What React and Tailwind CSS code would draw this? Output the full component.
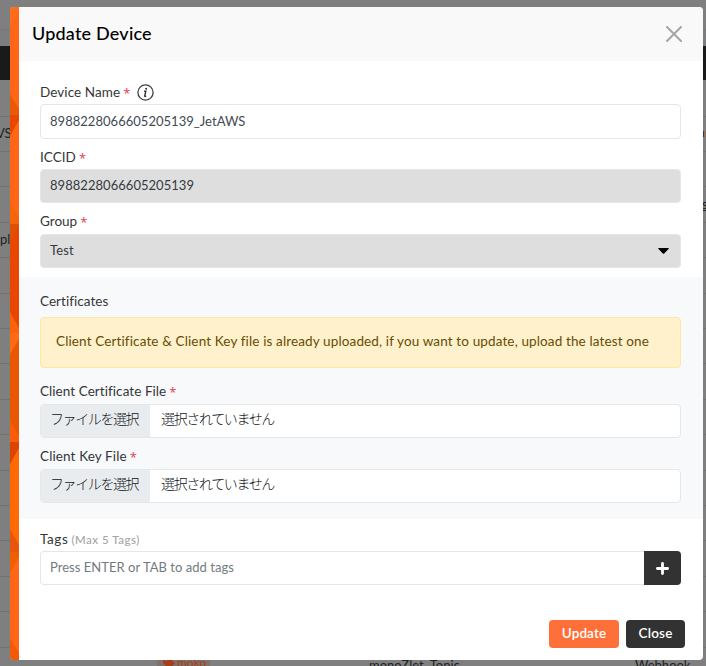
import React from 'react';

const rows = [
  { h: 'h-[36px]' },
  { h: 'h-[35px]', left: 'VS', right: 'name' },
  { h: 'h-[35px]' },
  { h: 'h-[36px]', right: 'link' },
  { h: 'h-[35px]', left: 'pl' },
  { h: 'h-[36px]' },
  { h: 'h-[35px]' },
  { h: 'h-[35px]' },
  { h: 'h-[36px]' },
  { h: 'h-[35px]' },
  { h: 'h-[36px]' },
  { h: 'h-[35px]' },
  { h: 'h-[35px]' },
  { h: 'h-[36px]' },
  { h: 'h-[35px]' },
  { h: 'h-[36px]' },
];

function Backdrop() {
  return (
    <div className="h-full overflow-hidden bg-[#7f7f7f] text-[13px] text-[#202225]">
      <div className="h-[30px] border-b border-[#777a7d]" />
      <div className="h-4 bg-[#7c7d7e]" />
      <div className="h-[35px] border-b border-[#7f7f7f] bg-[#1a1a1a] bg-clip-padding" />
      {rows.map((row, i) => (
        <div key={i} className={`${row.h} flex items-center justify-between overflow-hidden border-b border-[#727272]`}>
          <span className={row.left === 'VS' ? '-ml-1' : ''}>{row.left}</span>
          {row.right === 'name' && (
            <span className="flex h-1.5">
              <i className="w-px bg-[#223a66]" />
              <i className="ml-px w-px bg-[#a0673f]" />
            </span>
          )}
          {row.right === 'link' && <span className="w-[4px] underline">s</span>}
        </div>
      ))}
      <div className="flex h-5 leading-[20px]">
        <div className="ml-[157px] mt-[7px] flex h-4 w-[53px] items-center gap-0.5 bg-[#80716b] pl-1.5 text-[12px] text-[#a63e17]">
          <svg className="h-3 w-3 shrink-0" viewBox="0 0 12 12" fill="currentColor">
            <path fillRule="evenodd" d="M0 1.2Q0 0 1.2 0h4.5L12 6.3 6.7 11.6Q6 12 5.5 11.5L0 6zM3 1.7a1.2 1.2 0 1 0 0 2.4 1.2 1.2 0 0 0 0-2.4" />
          </svg>
          <span className="leading-4">moko</span>
        </div>
        <span className="ml-[159px] mt-[7px] w-[266px]">monoZlet_Topic</span>
        <span className="mt-[7px]">Webhook</span>
      </div>
    </div>
  );
}

function FacetStrip() {
  return (
    <svg className="h-[653px] w-[9px] shrink-0" viewBox="0 0 9 653" preserveAspectRatio="none">
      <rect width="9" height="653" fill="#ff6716" />
      <path d="M0 20L9 4V0H0z" fill="#ff6c1c" />
      <path d="M0 87L9 102V108H0z" fill="#e85a05" />
      <path d="M0 108H9V113L0 129z" fill="#e94600" />
      <path d="M0 195L9 211V217H0z" fill="#f56509" />
      <path d="M0 217H9V326L0 306z" fill="#e94600" />
      <path d="M0 217H9L0 236z" fill="#dd5205" />
      <path d="M0 305L9 321V326H0z" fill="#fa620c" />
      <path d="M0 326H9V435H0z" fill="#e95800" />
      <path d="M0 326H9V332L0 347z" fill="#ff6a14" />
      <path d="M0 414L9 429V435H0z" fill="#fb5c08" />
      <path d="M0 435H9V545H0z" fill="#ff6a04" />
      <path d="M0 435H9V441L0 457z" fill="#dc4500" />
      <path d="M0 522L9 538V545H0z" fill="#e8560b" />
      <path d="M0 545H9V550L0 566z" fill="#f05e00" />
      <path d="M0 631L9 646V653H0z" fill="#f35a08" />
    </svg>
  );
}

function Label({ children, tracking = '', required = true }) {
  return (
    <div className="flex h-5 items-center text-[13.5px] leading-5 text-[#343638]">
      <span className={tracking}>{children}</span>
      {required && <span className="ml-[3px] pt-px font-['Open_Sans'] text-[13px] text-[#e23c4c]">*</span>}
    </div>
  );
}

function FileField() {
  return (
    <div className="flex h-[34px] overflow-hidden rounded border border-[#e5e6e7] bg-white font-['Noto_Sans_CJK_JP',sans-serif] text-[14px] font-light text-[#101418]">
      <div className="flex w-[109px] items-center bg-[#e9ecef] pb-1.5 pl-[9px]">
        <span className="whitespace-nowrap tracking-[-1.4px]">ファイルを選択</span>
      </div>
      <div className="flex items-center pb-1.5 pl-[11px]">
        <span className="whitespace-nowrap tracking-[-1.35px]">選択されていません</span>
      </div>
    </div>
  );
}

export default function App() {
  return (
    <div className="relative h-[666px] w-[706px] overflow-hidden font-[Lato,'Noto_Sans_CJK_JP',sans-serif]">
      <Backdrop />
      <div className="absolute left-[10px] top-[7px] flex h-[653px] w-[693px] overflow-hidden rounded bg-white">
        <FacetStrip />
        <div className="flex flex-1 flex-col">
          <header className="flex h-[54px] items-center justify-between bg-[#f9f9f9] pl-[13px] pr-[21px]">
            <h1 className="pb-0.5 text-[18px] font-medium tracking-[0.2px] text-black">Update Device</h1>
            <svg className="h-4 w-4" viewBox="0 0 16 16" fill="none" stroke="#a5a5a5" strokeWidth="2" strokeLinecap="round">
              <path d="M1 1l14 14M15 1L1 15" />
            </svg>
          </header>

          <section className="flex h-[216px] flex-col px-[21px] pr-[22px] pt-[21px]">
            <div className="flex h-[22px] items-start">
              <Label tracking="tracking-[0.08px]">Device Name</Label>
              <svg className="ml-[7px] mt-[2px] h-[17px] w-[17px]" viewBox="0 0 17 17" fill="none">
                <circle cx="8.5" cy="8.5" r="7.6" stroke="#3d3f42" strokeWidth="1.3" />
                <path d="M7.1 7.2h1.7L7.7 12.1q0 .8 1.5.1" stroke="#303236" strokeWidth="1.4" />
                <circle cx="9.1" cy="4.7" r="1" fill="#303236" />
              </svg>
            </div>
            <div className="flex h-[35px] items-center rounded border border-[#e5e6e7] bg-white pl-[9px] text-[13px] text-[#414a54]">
              <span className="tracking-[0.03px]">8988228066605205139_JetAWS</span>
            </div>
            <div className="pb-[2px] pt-2">
              <Label tracking="tracking-[0.05px]">ICCID</Label>
            </div>
            <div className="flex h-[34px] items-center rounded border border-[#e5e6e7] bg-[#dedede] pl-[9px] text-[13px] text-[#343a40]">
              <span className="tracking-[0.04px]">8988228066605205139</span>
            </div>
            <div className="pb-[3px] pt-2">
              <Label>Group</Label>
            </div>
            <div className="flex h-[34px] items-center justify-between rounded border border-[#e5e6e7] bg-[#dedede] pl-[9px] pr-[11px] text-[13px] text-[#343a40]">
              <span className="tracking-[0.1px]">Test</span>
              <svg className="h-[6px] w-[11px]" viewBox="0 0 11 6">
                <path d="M.5 0h10q.5.3.2.7L6.2 5.5q-.7.7-1.4 0L.3.7Q0 .3.5 0z" fill="#000" />
              </svg>
            </div>
          </section>

          <section className="flex h-[242px] flex-col bg-[#f8f9fb] pl-[21px] pr-[22px] pt-[14px]">
            <div className="pb-[6px]">
              <Label tracking="tracking-[0.05px]" required={false}>Certificates</Label>
            </div>
            <div className="flex h-[51px] items-center rounded border border-[#ffe7a0] bg-[#fff1cc] pb-0.5 pl-[15px] text-[13.5px] text-[#664d03]">
              <span className="whitespace-nowrap tracking-[0.13px]">
                Client Certificate &amp; Client Key file is already uploaded, if you want to update, upload the latest one
              </span>
            </div>
            <div className="pb-[3px] pt-[13px]">
              <Label tracking="tracking-[0.06px]">Client Certificate File</Label>
            </div>
            <FileField />
            <div className="pb-[3px] pt-2">
              <Label tracking="tracking-[0.12px]">Client Key File</Label>
            </div>
            <FileField />
          </section>

          <section className="flex flex-col pl-[21px] pr-[22px] pt-[10px]">
            <div className="flex h-[22px] items-start gap-[3px]">
              <Label tracking="tracking-[0.6px]" required={false}>Tags</Label>
              <span className="text-[11.5px] font-medium leading-[22px] tracking-[0.5px] text-[#a4a4a4]">(Max 5 Tags)</span>
            </div>
            <div className="flex h-[34px]">
              <div className="flex flex-1 items-center rounded-l border border-r-0 border-[#e5e6e7] pl-[9px] text-[13px] text-[#727a81]">
                <span className="tracking-[0.03px]">Press ENTER or TAB to add tags</span>
              </div>
              <button className="flex w-[37px] items-center justify-center rounded-r bg-[#323232]">
                <svg className="h-[13px] w-[13px]" viewBox="0 0 13 13" fill="none" stroke="#fff" strokeWidth="2.8" strokeLinecap="round">
                  <path d="M6.5 1.4v10.2M1.4 6.5h10.2" />
                </svg>
              </button>
            </div>
          </section>

          <footer className="mt-[35px] flex h-7 justify-end gap-[7px] pr-[18px] text-[13.5px] font-semibold text-white">
            <button className="w-[70px] rounded bg-[#ff6f3a] pb-px tracking-[0.1px]">Update</button>
            <button className="w-[59px] rounded bg-[#323232] pb-px tracking-[0.2px]">Close</button>
          </footer>
        </div>
      </div>
    </div>
  );
}
